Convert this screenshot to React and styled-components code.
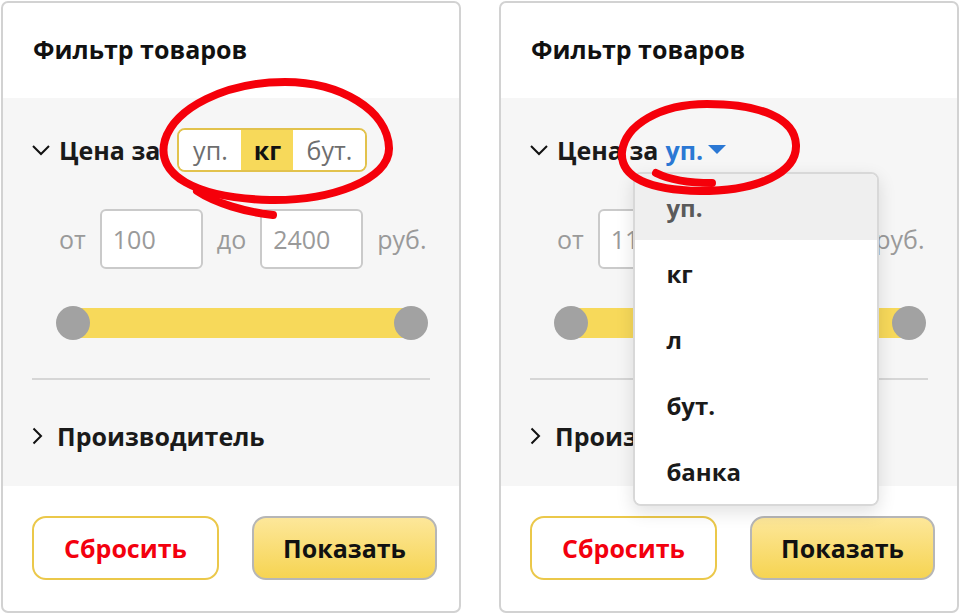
import React from "react";
import styled, { createGlobalStyle } from "styled-components";

const Global = createGlobalStyle`
  html, body { margin: 0; padding: 0; background: #fff; }
  body { font-family: "Open Sans", "Noto Sans", sans-serif; color: #1a1a1a; }
  * { box-sizing: border-box; }
`;

const Page = styled.div`
  position: relative;
  width: 960px;
  height: 614px;
  padding: 1px;
  display: flex;
  gap: 38px;
`;

const Panel = styled.div`
  position: relative;
  width: 460px;
  height: 612px;
  border: 2px solid #d2d2d2;
  border-radius: 7px;
  display: flex;
  flex-direction: column;
  background: #fff;
`;

const Header = styled.div`
  height: 95px;
  padding: 0 30px 4px;
  display: flex;
  align-items: center;
`;

const Title = styled.h2`
  margin: 0;
  font-size: 25px;
  font-weight: 700;
  color: #111;
`;

const Body = styled.div`
  background: #f6f6f6;
  height: 388px;
  padding: 30px 29px 0;
  display: flex;
  flex-direction: column;
`;

const SectionRow = styled.div`
  display: flex;
  align-items: center;
  height: ${(p) => p.$h || 44}px;
  margin-top: ${(p) => p.$mt || 0}px;
  gap: 9px;
`;

const Label = styled.span`
  font-size: 25px;
  font-weight: 700;
  color: #1a1a1a;
  white-space: nowrap;
`;

const Chevron = styled.svg`
  flex: none;
  display: block;
  margin-right: ${(p) => p.$mr || 0}px;
`;

const Segmented = styled.div`
  display: flex;
  height: 44px;
  margin-left: 8px;
  border: 2px solid #e2c24c;
  border-radius: 8px;
  overflow: hidden;
  background: #fff;
`;

const Segment = styled.div`
  display: flex;
  align-items: center;
  justify-content: center;
  width: ${(p) => p.$w}px;
  font-size: 25px;
  font-weight: ${(p) => (p.$active ? 700 : 400)};
  color: ${(p) => (p.$active ? "#111" : "#6e6e6e")};
  background: ${(p) => (p.$active ? "#f7d95a" : "#fff")};
`;

const PriceRow = styled.div`
  display: flex;
  align-items: center;
  gap: 14px;
  margin: 37px 0 0 27px;
  height: 60px;
`;

const Muted = styled.span`
  font-size: 25px;
  color: #9a9a9a;
`;

const PriceInput = styled.div`
  width: 103px;
  height: 60px;
  border: 2px solid #cacaca;
  border-radius: 6px;
  background: #fff;
  display: flex;
  align-items: center;
  padding-left: 11px;
  font-size: 25px;
  color: #9a9a9a;
`;

const Slider = styled.div`
  position: relative;
  width: 372px;
  height: 34px;
  margin: 37px 0 0 24px;
`;

const Track = styled.div`
  position: absolute;
  left: 17px;
  right: 17px;
  top: 2px;
  height: 30px;
  background: #f7d95a;
`;

const Knob = styled.div`
  position: absolute;
  top: 0;
  ${(p) => (p.$right ? "right: 0;" : "left: 0;")}
  width: 34px;
  height: 34px;
  border-radius: 50%;
  background: #a2a2a2;
`;

const Divider = styled.div`
  height: 2px;
  background: #d6d6d6;
  margin-top: 38px;
`;

const Footer = styled.div`
  flex: 1;
  display: flex;
  gap: 33px;
  padding: 30px 0 0 29px;
`;

const Button = styled.div`
  width: ${(p) => p.$w}px;
  height: 64px;
  border-radius: 14px;
  display: flex;
  align-items: center;
  justify-content: center;
  font-size: 25px;
  font-weight: 700;
  ${(p) =>
    p.$primary
      ? `border: 2px solid #b6b6b6; background: linear-gradient(#fde79a, #f6d452); color: #111;`
      : `border: 2px solid #ebc84a; background: #fff; color: #f3000e;`}
`;

const Trigger = styled.span`
  position: relative;
  display: inline-flex;
  align-items: center;
  gap: 5px;
  font-size: 25px;
  font-weight: 700;
  color: #2b78d4;
  margin-left: -2px;
`;

const Dropdown = styled.div`
  position: absolute;
  top: 39px;
  left: -32px;
  width: 246px;
  background: #fff;
  border: 2px solid #d8d8d8;
  border-radius: 8px;
  box-shadow: 0 6px 18px rgba(0, 0, 0, 0.12);
  overflow: hidden;
  z-index: 5;
`;

const Option = styled.div`
  height: 66px;
  display: flex;
  align-items: center;
  padding-left: 31px;
  font-size: 24px;
  font-weight: 700;
  color: ${(p) => (p.$selected ? "#5a5a5a" : "#1a1a1a")};
  background: ${(p) => (p.$selected ? "#efefef" : "#fff")};
`;

const Annotation = styled.svg`
  position: absolute;
  left: 0;
  top: 0;
  pointer-events: none;
  z-index: 10;
`;

const Down = () => (
  <Chevron width="18" height="12" viewBox="0 0 18 12">
    <path d="M1 2 L9 10 L17 2" fill="none" stroke="#111" strokeWidth="2" />
  </Chevron>
);

const Right = () => (
  <Chevron width="11" height="18" viewBox="0 0 11 18" $mr={5}>
    <path d="M1.5 1.5 L9 9 L1.5 16.5" fill="none" stroke="#111" strokeWidth="2" />
  </Chevron>
);

const PanelShell = ({ priceControl, minValue }) => (
  <Panel>
    <Header>
      <Title>Фильтр товаров</Title>
    </Header>
    <Body>
      <SectionRow>
        <Down />
        <Label>Цена за</Label>
        {priceControl}
      </SectionRow>
      <PriceRow>
        <Muted>от</Muted>
        <PriceInput>{minValue}</PriceInput>
        <Muted>до</Muted>
        <PriceInput>2400</PriceInput>
        <Muted>руб.</Muted>
      </PriceRow>
      <Slider>
        <Track />
        <Knob />
        <Knob $right />
      </Slider>
      <Divider />
      <SectionRow $h={40} $mt={36}>
        <Right />
        <Label>Производитель</Label>
      </SectionRow>
    </Body>
    <Footer>
      <Button $w={187}>Сбросить</Button>
      <Button $w={185} $primary>Показать</Button>
    </Footer>
  </Panel>
);

export default function App() {
  return (
    <>
      <Global />
      <Page>
        <PanelShell
          minValue="100"
          priceControl={
            <Segmented>
              <Segment $w={62}>уп.</Segment>
              <Segment $w={52} $active>кг</Segment>
              <Segment $w={72}>бут.</Segment>
            </Segmented>
          }
        />
        <PanelShell
          minValue="110"
          priceControl={
            <Trigger>
              уп.
              <svg width="18" height="10" viewBox="0 0 18 10">
                <path d="M0 0 H18 L9 9 Z" fill="#2b78d4" />
              </svg>
              <Dropdown>
                <Option $selected>уп.</Option>
                <Option>кг</Option>
                <Option>л</Option>
                <Option>бут.</Option>
                <Option>банка</Option>
              </Dropdown>
            </Trigger>
          }
        />
        <Annotation width="960" height="614" viewBox="0 0 960 614">
          <g fill="none" stroke="#f5000a" strokeWidth="8" strokeLinecap="round">
            <path d="M270 200 C330 201 390 180 389 148 C388 110 340 82 285 82 C225 82 175 108 165 140 C155 175 195 198 270 200" />
            <path d="M197 191 C215 203 245 212 273 215" />
            <path d="M700 191 C760 191 797 172 796 145 C795 118 760 104 707 104 C660 104 625 125 622 152 C620 178 650 190 700 191" />
            <path d="M656 173 C670 180 690 183 712 183" />
          </g>
        </Annotation>
      </Page>
    </>
  );
}
